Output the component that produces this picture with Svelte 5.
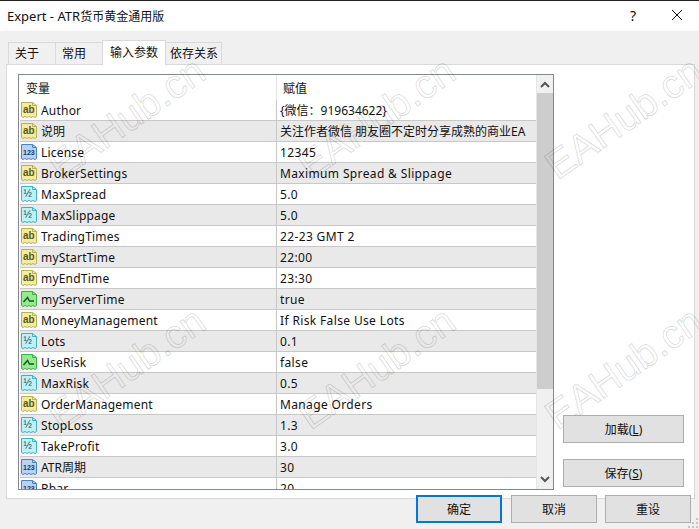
<script>
  const rows = [
    ['ab', 'Author', '{微信：919634622}'],
    ['ab', '说明', '关注作者微信 朋友圈不定时分享成熟的商业EA'],
    ['int', 'License', '12345'],
    ['ab', 'BrokerSettings', 'Maximum Spread & Slippage'],
    ['dbl', 'MaxSpread', '5.0'],
    ['dbl', 'MaxSlippage', '5.0'],
    ['ab', 'TradingTimes', '22-23 GMT 2'],
    ['ab', 'myStartTime', '22:00'],
    ['ab', 'myEndTime', '23:30'],
    ['bool', 'myServerTime', 'true'],
    ['ab', 'MoneyManagement', 'If Risk False Use Lots'],
    ['dbl', 'Lots', '0.1'],
    ['bool', 'UseRisk', 'false'],
    ['dbl', 'MaxRisk', '0.5'],
    ['ab', 'OrderManagement', 'Manage Orders'],
    ['dbl', 'StopLoss', '1.3'],
    ['dbl', 'TakeProfit', '3.0'],
    ['int', 'ATR周期', '30'],
    ['int', 'Rbar', '20']
  ];

  const tabs = ['关于', '常用', '输入参数', '依存关系'];
  const activeTab = 2;

  // left end of the baseline of each watermark
  const marks = [
    [60, 180], [310, 180], [557, 180],
    [60, 430], [310, 430], [557, 430]
  ];

  const isLatin = (s) => /^[\x00-\x7f]*$/.test(s);
</script>

<div class="dialog">
  <div class="titlebar">
    <span class="title">Expert - ATR<span class="cjk">货币黄金通用版</span></span>
    <span class="help">?</span>
    <svg class="close" width="12" height="12" viewBox="0 0 12 12">
      <path d="M1 1 L11 11 M11 1 L1 11" stroke="#111" stroke-width="1" fill="none" />
    </svg>
  </div>

  <div class="tabs">
    {#each tabs as tab, i}
      <div class="tab" class:active={i === activeTab}>{tab}</div>
    {/each}
  </div>

  <div class="panel">
    <div class="list">
      <div class="table">
        <div class="head">
          <div class="cell name">变量</div>
          <div class="cell value">赋值</div>
        </div>
        {#each rows as row, i}
          <div class="row" class:alt={i % 2 === 1}>
            <div class="cell name">
              <svg class="icon {row[0]}" width="16" height="16" viewBox="0 0 16 16">
                <path class="sheet" d="M0.5 0.5 H11.5 L15.5 3.5 V14.5 L14 15.5 L12 14.5 L10 15.5 L8 14.5 L6 15.5 L4 14.5 L2 15.5 L0.5 14.5 Z" />
                <path class="fold" d="M11.5 0.5 V3.5 H15.5" />
                {#if row[0] === 'ab'}
                  <text x="2" y="10.5">ab</text>
                {:else if row[0] === 'int'}
                  <text x="2" y="10.5" class="tiny">123</text>
                {:else if row[0] === 'dbl'}
                  <text x="2.5" y="10.5" class="half">½</text>
                {:else}
                  <path class="wave" d="M2.5 11 L6.5 6.5 L8.5 10 H13" />
                {/if}
              </svg>
              <span class:wide={isLatin(row[1])}>{row[1]}</span>
            </div>
            <div class="cell value" class:wider={isLatin(row[2])}>{row[2]}</div>
          </div>
        {/each}
      </div>
      <div class="scrollbar">
        <svg class="arrow" width="16" height="18" viewBox="0 0 16 18">
          <path d="M4 12 L8 8 L12 12" stroke="#555" stroke-width="2" fill="none" />
        </svg>
        <div class="track"><div class="thumb"></div></div>
        <svg class="arrow" width="16" height="18" viewBox="0 0 16 18">
          <path d="M4 6 L8 10 L12 6" stroke="#555" stroke-width="2" fill="none" />
        </svg>
      </div>
    </div>
    <div class="side">
      <button class="btn">加载(<u>L</u>)</button>
      <button class="btn">保存(<u>S</u>)</button>
    </div>
  </div>

  <div class="footer">
    <button class="btn primary">确定</button>
    <button class="btn">取消</button>
    <button class="btn">重设</button>
  </div>

  {#each marks as m}
    <div class="mark" style="left:{m[0]}px;top:{m[1] - 33}px">EAHub.cn</div>
  {/each}

  <svg class="grip" width="12" height="12" viewBox="0 0 12 12">
    <path d="M9 1h2v2H9z M5 5h2v2H5z M9 5h2v2H9z M1 9h2v2H1z M5 9h2v2H5z M9 9h2v2H9z" fill="#c4c4c4" />
  </svg>
</div>

<style>
  :global(body) {
    margin: 0;
    background: #f0f0f0;
  }

  .dialog {
    position: relative;
    width: 699px;
    height: 529px;
    overflow: hidden;
    display: flex;
    flex-direction: column;
    background: #f0f0f0;
    font-family: "Noto Sans", "Noto Sans CJK SC", sans-serif;
    font-size: 12px;
    color: #111;
  }

  .titlebar {
    height: 30px;
    flex: none;
    display: flex;
    align-items: center;
    background: #fff;
    border-top: 1px solid #222;
  }

  .title {
    margin-left: 7px;
    font-size: 13px;
    flex: 1;
  }

  .cjk {
    font-size: 12px;
  }

  .help {
    font-size: 14px;
    margin-right: 35px;
    margin-bottom: 2px;
  }

  .close {
    margin-right: 16px;
    margin-bottom: 2px;
  }

  .tabs {
    display: flex;
    align-items: flex-end;
    height: 33px;
    flex: none;
    padding-left: 8px;
    position: relative;
    z-index: 1;
  }

  .tab {
    height: 22px;
    line-height: 21px;
    width: 48px;
    padding-left: 6px;
    border: 1px solid #d9d9d9;
    border-bottom: none;
    margin-right: -1px;
    box-sizing: border-box;
  }

  .tab:last-child {
    width: 57px;
    padding-left: 4px;
  }

  .tab.active {
    height: 25px;
    width: 64px;
    padding-left: 7px;
    background: #fff;
    position: relative;
    z-index: 1;
    margin-bottom: -1px;
    line-height: 23px;
  }

  .panel {
    margin: 0 4px 0 6px;
    height: 435px;
    flex: none;
    box-sizing: border-box;
    background: #fff;
    border: 1px solid #d9d9d9;
    display: flex;
    padding: 9px 10px 8px 11px;
    gap: 9px;
  }

  .list {
    width: 536px;
    flex: none;
    box-sizing: border-box;
    border: 1px solid #828790;
    display: flex;
    overflow: hidden;
  }

  .table {
    flex: none;
    width: 516px;
    margin-left: 1px;
    overflow: hidden;
  }

  .head,
  .row {
    display: flex;
  }

  .head {
    height: 25px;
    align-items: center;
  }

  .head .value {
    height: 25px;
    border-left-color: #e5e5e5;
  }

  .row {
    height: 21px;
    box-sizing: border-box;
    border-bottom: 1px solid #c8c8c8;
  }

  .row.alt {
    background: #e9e9e9;
  }

  .cell {
    display: flex;
    align-items: center;
    white-space: nowrap;
    box-sizing: border-box;
  }

  .name {
    width: 256px;
    flex: none;
    gap: 4px;
    padding-left: 1px;
  }

  .head .name {
    padding-left: 6px;
  }

  .value {
    flex: 1;
    border-left: 1px solid #c8c8c8;
    padding-left: 3px;
  }

  .head .value {
    padding-left: 6px;
  }

  .wide {
    letter-spacing: 0.2px;
  }

  .wider {
    letter-spacing: 0.36px;
  }

  .icon {
    flex: none;
  }

  .sheet {
    stroke-width: 1;
  }

  .fold {
    fill: none;
    stroke-width: 1;
  }

  .icon text {
    font-family: "Liberation Sans", sans-serif;
    font-size: 10px;
    font-weight: 700;
    fill: #5a5a20;
  }

  .icon text.tiny {
    font-size: 7px;
    fill: #123a70;
  }

  .icon text.half {
    font-size: 10px;
    font-weight: 400;
    fill: #0f4a60;
  }

  .ab .sheet {
    fill: #f3eb9e;
    stroke: #bcae55;
  }

  .ab .fold {
    stroke: #bcae55;
  }

  .int .sheet {
    fill: #b7d2f2;
    stroke: #4a83c8;
  }

  .int .fold {
    stroke: #4a83c8;
  }

  .dbl .sheet {
    fill: #bff0f4;
    stroke: #3fb0c8;
  }

  .dbl .fold {
    stroke: #3fb0c8;
  }

  .bool .sheet {
    fill: #95e98f;
    stroke: #3fae45;
  }

  .bool .fold {
    stroke: #3fae45;
  }

  .wave {
    fill: none;
    stroke: #0d5a18;
    stroke-width: 1.4;
  }

  .scrollbar {
    width: 16px;
    flex: none;
    margin-right: 1px;
    display: flex;
    flex-direction: column;
    background: #f0f0f0;
    border-left: 1px solid #e5e5e5;
  }

  .arrow {
    flex: none;
  }

  .track {
    flex: 1;
  }

  .thumb {
    height: 296px;
    background: #cdcdcd;
  }

  .side {
    flex: 1;
    display: flex;
    flex-direction: column;
    justify-content: flex-end;
    gap: 16px;
    padding-bottom: 3px;
    position: relative;
    z-index: 2;
  }

  .btn {
    height: 28px;
    padding: 0;
    border: 1px solid #adadad;
    background: #e1e1e1;
    font: inherit;
    color: #111;
    position: relative;
    z-index: 2;
  }

  .side .btn {
    width: 121px;
  }

  .footer {
    display: flex;
    justify-content: flex-end;
    gap: 8px;
    padding: 0 8px 0 0;
    margin-top: -4px;
    position: relative;
    z-index: 2;
  }

  .footer .btn {
    width: 86px;
  }

  .footer .primary {
    margin-right: 1px;
    border: 2px solid #0078d7;
  }

  .mark {
    position: absolute;
    font-family: "Liberation Sans", sans-serif;
    font-size: 40px;
    line-height: 40px;
    white-space: nowrap;
    color: transparent;
    -webkit-text-stroke: 1px rgba(0, 0, 0, 0.15);
    transform: rotate(-35deg);
    transform-origin: 0 33px;
    pointer-events: none;
  }

  .grip {
    position: absolute;
    right: 0;
    bottom: 0;
  }
</style>
